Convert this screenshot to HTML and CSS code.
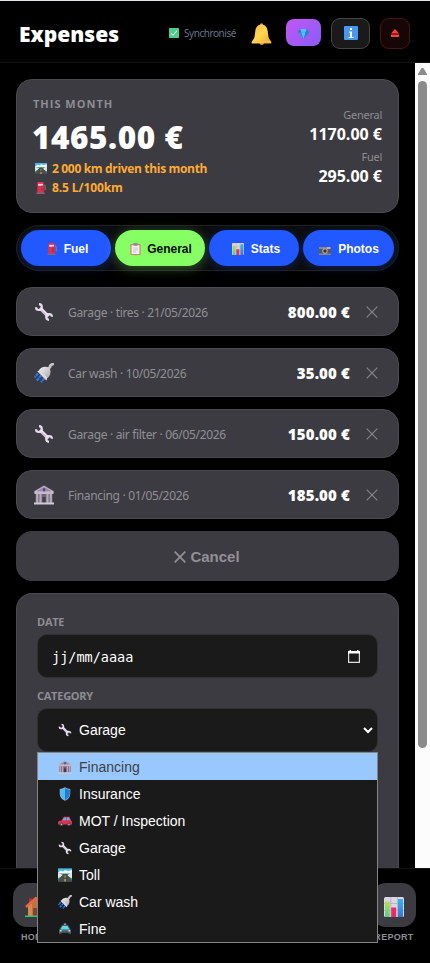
FILE: index.html
```html
<!DOCTYPE html>
<html lang="en">
<head>
<meta charset="utf-8">
<title>Expenses</title>
<link rel="stylesheet" href="styles.css">
</head>
<body>
<svg class="sprite" width="0" height="0" aria-hidden="true">
  <defs>
    <linearGradient id="gold" x1="0" y1="0" x2="1" y2="1"><stop offset="0" stop-color="#ffb94a"/><stop offset=".5" stop-color="#ffd84f"/><stop offset="1" stop-color="#efa03c"/></linearGradient>
    <linearGradient id="metal" x1="0" y1="0" x2="1" y2="1"><stop offset="0" stop-color="#f6f4f5"/><stop offset="1" stop-color="#a9a5a9"/></linearGradient>
    <linearGradient id="green" x1="0" y1="0" x2="0" y2="1"><stop offset="0" stop-color="#b3e04c"/><stop offset="1" stop-color="#4fd08a"/></linearGradient>
    <linearGradient id="blue" x1="0" y1="0" x2="0" y2="1"><stop offset="0" stop-color="#35b4f6"/><stop offset="1" stop-color="#3578d2"/></linearGradient>
  </defs>
  <symbol id="check" viewBox="0 0 20 20"><rect width="20" height="20" rx="1.5" fill="#4fcb8b"/><path d="M4 10.5l4 4 8-9" fill="none" stroke="#fff" stroke-width="2"/></symbol>
  <symbol id="bell" viewBox="0 0 20 22"><circle cx="10" cy="1.8" r="1.5" fill="#f2a93f"/><path d="M8 20h4.500q-.3 2-2.200 2t-2.300-2z" fill="#f08a4b"/><path d="M10 1.500c4 0 5.800 3 6.200 6.500l.8 6c.3 2 2.500 3.500 3 5.500 0 .8-.4 1-1 1H1c-.6 0-1-.2-1-1 .5-2 2.700-3.500 3-5.500l.8-6C4.200 4.500 6 1.500 10 1.500z" fill="url(#gold)"/><path d="M1 19h18" stroke="#ffcf58" stroke-width="1"/></symbol>
  <symbol id="gem" viewBox="0 0 20 18"><path d="M4 0h12l4 6-10 12L0 6z" fill="#2d91dc"/><path d="M4 0L0 6h6z" fill="#2472c8"/><path d="M4 0h12l-2 6H6z" fill="#55bdf0"/><path d="M6 6h8l-4 12z" fill="#5abdee"/><path d="M16 0l4 6h-6z" fill="#277ccc"/><path d="M14 6h6L10 18z" fill="#2381d3"/></symbol>
  <symbol id="info" viewBox="0 0 14 14"><rect width="14" height="14" rx="1" fill="#4898ef"/><rect x="6" y="2" width="2" height="2" fill="#fff"/><path d="M5 5.500h3V11h1.500v1h-5v-1H6V6.500H5z" fill="#fff"/></symbol>
  <symbol id="eject" viewBox="0 0 8 8"><path d="M4 0l4 4.600H0z" fill="#ff3f3f"/><rect y="5.500" width="8" height="2.500" fill="#ff3f3f"/></symbol>
  <symbol id="road" viewBox="0 0 14 13"><rect width="14" height="13" fill="#338b6c"/><path d="M0 0h14v4H0z" fill="#45b9e8"/><path d="M0 4l3-2 2 1 2-1.500 3 1 4-1V5H0z" fill="#eef5f2"/><path d="M0 4.500l5 2L0 10zM14 3.500l-5 3.500 5 3z" fill="#dcebe5"/><path d="M5.500 5.500h3L14 12v1H0v-1z" fill="#494b50"/><path d="M6.600 7h.8v2h-.8zM6.500 10.500h1V13h-1z" fill="#ffce43"/></symbol>
  <symbol id="pump" viewBox="0 0 10 13"><path d="M8 3c2 0 1.500 2 1.500 6" fill="none" stroke="#888" stroke-width="1"/><rect x="1" width="7" height="12" rx="1" fill="#df304e"/><rect x="2" y="2" width="5" height="2" fill="#f9dce2"/><rect x="5.500" y="4" width="1" height="6" fill="#b91c41"/><rect y="11.500" width="9" height="1.500" fill="#756e78"/></symbol>
  <symbol id="clip" viewBox="0 0 11 13"><rect y="1" width="11" height="12" rx="1" fill="#c87d68"/><rect x="1.200" y="2.300" width="8.600" height="9.700" fill="#f5eef5"/><rect x="3" width="5" height="3" rx="1" fill="#918b9b"/><path d="M3 5.500h5M3 7.500h5M3 9.500h3" stroke="#b7abc0" stroke-width=".7"/></symbol>
  <symbol id="chart" viewBox="0 0 20 20"><rect width="20" height="20" rx="1.500" fill="#dcd5e2"/><path d="M0 6.500h20M0 13.500h20M6.800 0v20M13.500 0v20" stroke="#b8acc1" stroke-width=".8"/><rect x="1" y="4.500" width="4.700" height="15.500" fill="url(#green)"/><rect x="7.200" y="10.500" width="5" height="9.500" fill="#ea2c66"/><rect x="14" y="2" width="5" height="18" fill="url(#blue)"/></symbol>
  <symbol id="camera" viewBox="0 0 12 9"><path d="M0 1h12v8H0z" fill="#8c8587"/><rect y="3" width="12" height="4.500" fill="#5a5758"/><circle cx="6" cy="5" r="2.700" fill="#b2b0b2"/><circle cx="6" cy="5" r="1.700" fill="#353338"/><rect x="8" y="1.500" width="3" height="1" fill="#e2dede"/></symbol>
  <symbol id="wrench" viewBox="0 0 20 20"><path d="M6 6l8.500 8.500" stroke="#d3c4de" stroke-width="3.600"/><path d="M2 5.200A2.900 2.900 0 1 0 5 2.200M18 14.800A2.900 2.900 0 1 0 15 17.800" fill="none" stroke="#e7dced" stroke-width="2.200"/><path d="M7 6l7.500 7.500" stroke="#f6eff8" stroke-width="1"/></symbol>
  <symbol id="shower" viewBox="0 0 20 20"><path d="M13.500 6.500L16 4q0-2 2.700-2.800" fill="none" stroke="#c7c5c8" stroke-width="2.800" stroke-linecap="round"/><path d="M4.500 8q3-5 8.500-4 3.500.5 3.500 4.500 0 5.500-4.500 7.500z" fill="url(#metal)"/><path d="M3.200 8.300q2-1.500 4.500.8l5 5.200q1 2-.4 3.300z" fill="#dedbdc"/><path d="M4 10.500L.8 14.300M7.200 12.500l-4.500 5M10 15.500l-3 3.700" stroke="#2979f6" stroke-width="2.200" stroke-dasharray="3 .6"/></symbol>
  <symbol id="bank" viewBox="0 0 20 20"><path d="M10 .500l9.500 5.500v2H.5V6z" fill="#b9b0c0"/><path d="M10 2l8 4.500H2z" fill="#958c9f"/><rect x=".5" y="6.500" width="19" height="2.500" fill="#c4bbca"/><rect x="1.500" y="9" width="17" height="9" fill="#706576"/><path d="M3.200 9v9M6.500 9v9M13.500 9v9M16.800 9v9" stroke="#b5abbc" stroke-width="2.200"/><path d="M8.500 12h3v6h-3z" fill="#413a49"/><rect y="17.500" width="20" height="2" fill="#d1cad4"/><rect x="9" y="3" width="2.200" height="3.500" rx="1" fill="#6437ae"/></symbol>
  <symbol id="shield" viewBox="0 0 14 16"><path d="M7 .3q3 2 6 2v5q0 5.700-6 8.400-6-2.700-6-8.400v-5q3 0 6-2z" fill="#9fb3cc"/><path d="M7 1.100Q4.300 2.800 1.500 3V7q0 5 5.500 8z" fill="#4abdfa"/><path d="M7 1.100q2.700 1.700 5.500 1.900V7q0 5-5.500 8z" fill="#207bd1"/></symbol>
  <symbol id="car" viewBox="0 0 16 12"><path d="M1 6l3-.7L6.500 1H13l2 4.500 1 1V10H0V7z" fill="#e52e4e"/><path d="M5.200 5L7 2h2v3zM10 2h2.500l1.300 3H10z" fill="#56b8ec"/><circle cx="4" cy="9.800" r="2" fill="#56525c"/><circle cx="12.500" cy="9.800" r="2" fill="#56525c"/><circle cx="4" cy="9.800" r=".8" fill="#c7c2cc"/><circle cx="12.500" cy="9.800" r=".8" fill="#c7c2cc"/></symbol>
  <symbol id="police" viewBox="0 0 14 12"><rect x="5.500" y="0" width="3" height="2" fill="#8d8f98"/><path d="M3.500 2h7L13 6l1 2v4h-3v-1H3v1H0V8l1-2z" fill="#575b66"/><path d="M4.200 3h5.600L12 6.500H2z" fill="#5bddf1"/><path d="M2 6.500h10v1.500H2z" fill="#2bafb9"/><rect x="1" y="8" width="2" height="1.300" fill="#fff"/><rect x="11" y="8" width="2" height="1.300" fill="#fff"/></symbol>
  <symbol id="house" viewBox="0 0 20 20"><path d="M3 9l8-7 7 7v10H3z" fill="#bd743f"/><path d="M3 9l4-4v14H3z" fill="#d58b4c"/><path d="M4 1.500h3V6H4z" fill="#a93b31"/><path d="M1 10L11 1l8 9" fill="none" stroke="#ef643e" stroke-width="2.500"/><rect x="8" y="11" width="5" height="8" fill="#7e4535"/><path d="M0 18.500h20V20H0z" fill="#34c373"/></symbol>
  <symbol id="cross" viewBox="0 0 12 12"><path d="M.7.7l10.600 10.600M11.300.7L.7 11.300" fill="none" stroke="currentColor" stroke-width="1.150"/></symbol>
</svg>
<div class="app">
  <header class="header">
    <h1>Expenses</h1>
    <span class="sync"><svg class="i-check"><use href="#check"/></svg><span>Synchronisé</span></span>
    <svg class="i-bell"><use href="#bell"/></svg>
    <button class="hbtn premium"><svg><use href="#gem"/></svg></button>
    <button class="hbtn about"><svg><use href="#info"/></svg></button>
    <button class="hbtn logout"><svg><use href="#eject"/></svg></button>
  </header>

  <div class="viewport">
    <main>
      <section class="card summary">
        <div class="month">
          <span class="caption">THIS MONTH</span>
          <strong class="total">1465.00 €</strong>
          <span class="metric"><svg class="i-road"><use href="#road"/></svg><span class="km">2 000 km driven this month</span></span>
          <span class="metric fuel"><svg class="i-pump"><use href="#pump"/></svg><span class="rate">8.5 L/100km</span></span>
        </div>
        <div class="split">
          <span>General</span><strong>1170.00 €</strong>
          <span>Fuel</span><strong>295.00 €</strong>
        </div>
      </section>

      <nav class="tabs">
        <button><svg class="t-pump"><use href="#pump"/></svg>Fuel</button>
        <button class="active"><svg class="t-clip"><use href="#clip"/></svg>General</button>
        <button><svg class="t-chart"><use href="#chart"/></svg>Stats</button>
        <button><svg class="t-camera"><use href="#camera"/></svg>Photos</button>
      </nav>

      <article class="card row"><svg class="lead"><use href="#wrench"/></svg><span class="desc">Garage · tires · 21/05/2026</span><strong>800.00 €</strong><svg class="x"><use href="#cross"/></svg></article>
      <article class="card row"><svg class="lead"><use href="#shower"/></svg><span class="desc">Car wash · 10/05/2026</span><strong>35.00 €</strong><svg class="x"><use href="#cross"/></svg></article>
      <article class="card row"><svg class="lead"><use href="#wrench"/></svg><span class="desc">Garage · air filter · 06/05/2026</span><strong>150.00 €</strong><svg class="x"><use href="#cross"/></svg></article>
      <article class="card row"><svg class="lead"><use href="#bank"/></svg><span class="desc">Financing · 01/05/2026</span><strong>185.00 €</strong><svg class="x"><use href="#cross"/></svg></article>

      <button class="cancel"><svg viewBox="0 0 12 12"><path d="M.7.7l10.600 10.600M11.300.7L.7 11.300" fill="none" stroke="currentColor" stroke-width="1.700"/></svg>Cancel</button>

      <section class="card form">
        <div class="label">DATE</div>
        <div class="field date"><span>jj/mm/aaaa</span>
          <svg viewBox="0 0 12 13"><path d="M.6 1.500h10.800v10.900H.6z" fill="none" stroke="#ddd" stroke-width="1.200"/><path d="M0 1h12v2.500H0zM1.500 0H3v2H1.500zM9 0h1.500v2H9z" fill="#fff"/></svg>
        </div>
        <div class="label second">CATEGORY</div>
        <div class="field select"><svg class="pick"><use href="#wrench"/></svg><span>Garage</span>
          <svg class="chev" viewBox="0 0 10 7"><path d="M1 1l4 4 4-4" fill="none" stroke="#fff" stroke-width="2"/></svg>
          <ul class="menu">
            <li class="hot"><svg><use href="#bank"/></svg>Financing</li>
            <li><svg><use href="#shield"/></svg>Insurance</li>
            <li><svg><use href="#car"/></svg>MOT / Inspection</li>
            <li><svg><use href="#wrench"/></svg>Garage</li>
            <li><svg><use href="#road"/></svg>Toll</li>
            <li><svg><use href="#shower"/></svg>Car wash</li>
            <li><svg class="small"><use href="#police"/></svg>Fine</li>
          </ul>
        </div>
      </section>
    </main>
    <div class="scrollbar"><i class="up"></i><i class="thumb"></i></div>
  </div>

  <footer class="bottom">
    <div class="item"><span class="tile"><svg><use href="#house"/></svg></span><span>HOME</span></div>
    <div class="item"><span class="tile"><svg><use href="#chart"/></svg></span><span>REPORT</span></div>
  </footer>
</div>
</body>
</html>
```

FILE: styles.css
```css
* { box-sizing: border-box; }
body { margin: 0; background: #000; color: #fff; font-family: "Open Sans", "Noto Sans", sans-serif; }
button { margin: 0; padding: 0; border: 0; font-family: "Liberation Sans", Arial, sans-serif; }
svg { display: block; flex: none; }
.sprite { position: absolute; }
.app { width: 430px; height: 963px; display: flex; flex-direction: column; overflow: hidden; }

.header { height: 63px; flex: none; display: flex; align-items: center; padding: 3px 20px 0; border-top: 1px solid #dfe4e6; border-bottom: 1px solid #121212; }
h1 { margin: 2px auto 0 -1px; font-family: "Noto Sans", sans-serif; font-size: 21px; line-height: 30px; font-weight: 900; letter-spacing: 0; white-space: nowrap; }
.sync { display: flex; align-items: center; gap: 5px; width: 68px; margin-right: 14px; font-family: "Noto Sans", sans-serif; font-size: 10px; letter-spacing: -.45px; color: #64748b; white-space: nowrap; }
.i-check { width: 10px; height: 10px; }
.i-bell { width: 21px; height: 22px; margin: 1px 14px 0 0; }
.hbtn { display: grid; place-items: center; flex: none; }
.premium { width: 35px; height: 27px; border-radius: 8px; background: linear-gradient(135deg, #c257f4, #8a5cf6); margin: -1px 10px 0 0; }
.premium svg { width: 11px; height: 10px; margin-top: 2px; }
.about { width: 39px; height: 31px; border-radius: 9px; background: #1a1a1a; border: 1px solid #454545; margin-right: 10px; }
.about svg { width: 14px; height: 14px; }
.logout { width: 30px; height: 31px; border-radius: 9px; background: #170606; border: 1px solid #481515; }
.logout svg { width: 8px; height: 8px; }

.viewport { height: 805px; flex: none; display: flex; }
main { width: 415px; height: 805px; padding: 16px 16px 0; display: flex; flex-direction: column; }
.card { background: #3c3b41; border: 1px solid #4b4a50; border-radius: 16px; flex: none; }
.summary { height: 134px; padding: 15px 16px; display: flex; justify-content: space-between; margin-bottom: 12px; }
.month { display: flex; flex-direction: column; }
.caption { font-size: 11px; line-height: 18px; font-weight: 700; letter-spacing: 1px; color: #8e8d92; }
.total { margin-left: -1px; font-family: "Noto Sans", sans-serif; font-size: 31.500px; line-height: 47px; height: 46px; font-weight: 900; letter-spacing: .55px; white-space: nowrap; }
.metric { display: flex; align-items: center; height: 20px; font-size: 12px; font-weight: 700; color: #ffab32; white-space: nowrap; }
.fuel { margin-top: 1px; }
.i-road { width: 12px; height: 11px; margin: 0 5px 0 2px; }
.i-pump { width: 10px; height: 12px; margin: 0 6px 0 3px; }
.km { letter-spacing: -.33px; }
.rate { letter-spacing: -.1px; }
.split { display: flex; flex-direction: column; align-items: flex-end; padding-top: 11px; }
.split span { font-family: "Noto Sans", sans-serif; font-size: 11px; line-height: 18px; letter-spacing: -.25px; color: #8e8d92; }
.split strong { font-size: 16px; line-height: 20px; margin-bottom: 4px; font-weight: 700; }

.tabs { height: 46px; flex: none; padding: 4px; border: 1px solid #202020; border-radius: 23px; background: #0b0d10; display: grid; grid-template-columns: 90px 90px 90px 91px; gap: 4px; margin-bottom: 16px; }
.tabs button { display: flex; align-items: center; justify-content: center; height: 36px; padding: 1px 0 0 1px; border-radius: 18px; background: #2158ff; color: #fff; font-size: 12px; font-weight: 700; box-shadow: 0 2px 10px rgba(33, 88, 255, .25); }
.tabs .active { background: #86ff64; color: #050b03; padding-left: 2px; box-shadow: 0 2px 12px rgba(134, 255, 100, .35); }
.t-pump { width: 10px; height: 12px; margin: 1px 7px 0 2px; }
.t-clip { width: 11px; height: 12px; margin-right: 6px; }
.t-chart { width: 12px; height: 12px; margin: 0 7px 0 3px; }
.t-camera { width: 12px; height: 9px; margin: 4px 7px 0 0; }

.row { height: 49px; padding: 0 20px 0 17px; display: flex; align-items: center; margin-bottom: 12px; }
.lead { width: 20px; height: 20px; margin-right: 14px; }
.desc { flex: 1; padding-top: 2px; font-family: "Noto Sans", sans-serif; font-size: 12px; letter-spacing: -.32px; color: #909094; white-space: nowrap; }
.row strong { font-family: "Noto Sans", sans-serif; font-size: 15px; font-weight: 900; letter-spacing: .15px; margin-right: 16px; padding-top: 1px; white-space: nowrap; }
.x { width: 12px; height: 12px; color: #85858a; }

.cancel { height: 50px; flex: none; border-radius: 16px; background: #3c3b41; color: #919095; font-size: 15px; font-weight: 700; display: flex; align-items: center; justify-content: center; gap: 4px; padding: 1px 1px 0 0; margin-bottom: 12px; }
.cancel svg { width: 12px; height: 12px; }
.form { height: 275px; padding: 19px 20px 0; border-bottom: 0; border-radius: 16px 16px 0 0; }
.label { font-size: 11px; line-height: 18px; height: 21px; font-weight: 700; letter-spacing: -.25px; color: #8e8d92; }
.second { margin-top: 9px; }
.field { position: relative; height: 44px; background: #1a1a1a; border: 1px solid #303033; border-radius: 10px; display: flex; align-items: center; }
.date { padding: 0 17px 0 14px; justify-content: space-between; font-family: "DejaVu Sans Mono", monospace; font-size: 13.500px; }
.date span { padding-top: 1px; }
.date svg { width: 12px; height: 13px; }
.select { padding: 0 4px 0 20px; font-family: "Liberation Sans", Arial, sans-serif; font-size: 14px; }
.pick { width: 14px; height: 14px; margin-right: 7px; }
.chev { width: 10px; height: 7px; margin-left: auto; }
.menu { position: absolute; z-index: 5; left: -1px; top: 43px; width: 341px; height: 191px; margin: 0; padding: 0; list-style: none; background: #1a1a1a; border: 1px solid #858585; font-size: 14px; }
.menu li { height: 27px; display: flex; align-items: center; gap: 7px; padding: 0 0 0 20px; }
.menu svg { width: 14px; height: 14px; }
.menu .small { width: 12px; height: 11px; margin: 0 1px; }
.menu .hot { background: #99c8ff; color: #3e4043; }

.scrollbar { width: 15px; background: #fcfcfc; display: flex; flex-direction: column; align-items: center; padding-top: 5px; }
.up { width: 9px; height: 7px; background: #8b8b8b; clip-path: polygon(40% 0, 60% 0, 100% 85%, 100% 100%, 0 100%, 0 85%); }
.thumb { width: 9px; height: 667px; border-radius: 5px; background: #8b8b8b; margin-top: 6px; }

.bottom { height: 95px; flex: none; border-top: 1px solid #121212; padding: 14px 14px 0 13px; display: flex; justify-content: space-between; }
.item { width: 44px; display: flex; flex-direction: column; align-items: center; font-family: "Liberation Sans", Arial, sans-serif; font-size: 9px; font-weight: 700; line-height: 20px; letter-spacing: .3px; color: #8e8d92; }
.tile { width: 44px; height: 44px; border-radius: 14px; background: #3c3b41; display: grid; place-items: center; flex: none; }
.tile svg { width: 20px; height: 20px; margin-top: 4px; }
```
